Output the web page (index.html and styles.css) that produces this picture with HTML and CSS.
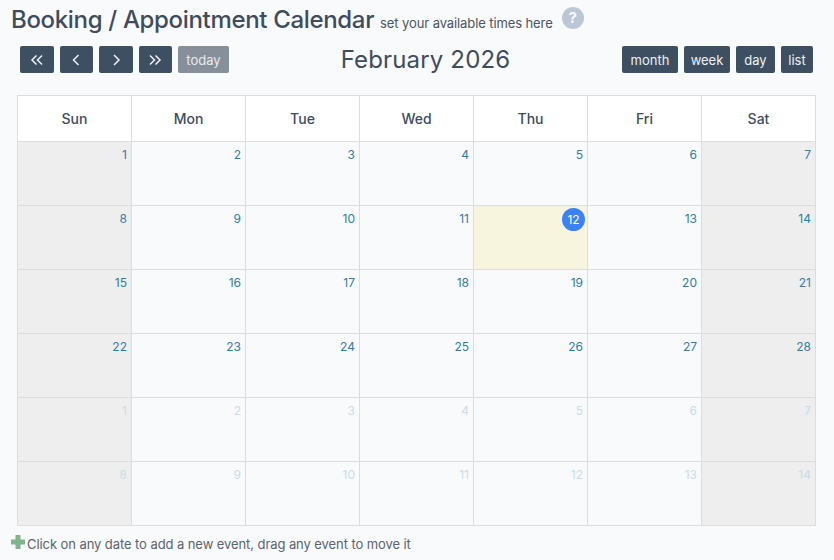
FILE: index.html
```html
<!DOCTYPE html>
<html lang="en">
<head>
<meta charset="utf-8">
<title>Booking / Appointment Calendar</title>
<link rel="stylesheet" href="styles.css">
</head>
<body>
<header class="page-head">
  <h1 class="page-title">Booking / Appointment Calendar</h1>
  <span class="page-sub">set your available times here</span>
  <span class="help">?</span>
</header>
<div class="toolbar">
  <div class="btn-group">
    <button class="btn"><svg class="ico" viewBox="0 0 14 12"><path d="M6.500 1.500 2 6l4.500 4.500M12 1.500 7.500 6l4.500 4.500"/></svg></button>
    <button class="btn"><svg class="ico" viewBox="0 0 14 12"><path d="M9.500 1 4.500 6l5 5"/></svg></button>
    <button class="btn"><svg class="ico" viewBox="0 0 14 12"><path d="M5 1l5 5-5 5"/></svg></button>
    <button class="btn"><svg class="ico" viewBox="0 0 14 12"><path d="M2 1.500 6.500 6 2 10.500M7.500 1.500 12 6l-4.500 4.500"/></svg></button>
    <button class="btn btn-today">today</button>
  </div>
  <h2 class="cal-title">February 2026</h2>
  <div class="btn-group">
    <button class="btn btn-month">month</button>
    <button class="btn btn-week">week</button>
    <button class="btn btn-day">day</button>
    <button class="btn btn-list">list</button>
  </div>
</div>
<div class="calendar">
  <div class="dow">Sun</div><div class="dow">Mon</div><div class="dow">Tue</div><div class="dow">Wed</div><div class="dow">Thu</div><div class="dow">Fri</div><div class="dow">Sat</div>

  <div class="day weekend">1</div><div class="day">2</div><div class="day">3</div><div class="day">4</div><div class="day">5</div><div class="day">6</div><div class="day weekend">7</div>
  <div class="day weekend">8</div><div class="day">9</div><div class="day">10</div><div class="day">11</div><div class="day today"><span class="today-num">12</span></div><div class="day">13</div><div class="day weekend">14</div>
  <div class="day weekend">15</div><div class="day">16</div><div class="day">17</div><div class="day">18</div><div class="day">19</div><div class="day">20</div><div class="day weekend">21</div>
  <div class="day weekend">22</div><div class="day">23</div><div class="day">24</div><div class="day">25</div><div class="day">26</div><div class="day">27</div><div class="day weekend">28</div>
  <div class="day weekend other">1</div><div class="day other">2</div><div class="day other">3</div><div class="day other">4</div><div class="day other">5</div><div class="day other">6</div><div class="day weekend other">7</div>
  <div class="day weekend other">8</div><div class="day other">9</div><div class="day other">10</div><div class="day other">11</div><div class="day other">12</div><div class="day other">13</div><div class="day weekend other">14</div>
</div>
<p class="hint"><svg class="plus" viewBox="0 0 14 14"><path d="M4.500 0h5v4.500H14v5H9.500V14h-5V9.500H0v-5h4.500z"/></svg>Click on any date to add a new event, drag any event to move it</p>
</body>
</html>
```
FILE: styles.css
```css
* { box-sizing: border-box; }
html, body { margin: 0; height: 100%; }
body {
  width: 834px;
  height: 560px;
  overflow: hidden;
  background: #f8fafc;
  color: #3e4c5d;
  font-family: Inter, "Liberation Sans", sans-serif;
  padding: 5px 0 0 11px;
}
.page-head { display: flex; align-items: baseline; height: 29px; }
.page-title { margin: 0; font-size: 24px; line-height: 30px; font-weight: 500; letter-spacing: -0.33px; color: #3e4c5d; }
.page-sub { margin-left: 6px; font-size: 13px; color: #4b5563; letter-spacing: -0.1px; }
.help {
  align-self: flex-start;
  margin: 2px 0 0 9px;
  width: 22px; height: 22px; border-radius: 50%;
  background: #bcc7d5; color: #f8fafc;
  font-size: 15px; font-weight: 700; line-height: 22px; text-align: center;
}
.toolbar {
  display: flex; justify-content: space-between; align-items: center;
  width: 793px; height: 27px; margin: 12px 0 0 9px;
}
.btn-group { display: flex; gap: 6px; }
.btn {
  height: 27px; width: 33.500px; padding: 0;
  display: flex; align-items: center; justify-content: center;
  background: #3e4f61; color: #eef1f5; border: 0; border-radius: 2px;
  font-family: inherit; font-size: 13px; letter-spacing: 0;
}
.btn-today { width: 51px; background: #868f9a; color: #e8ebee; }
.btn-month { width: 56px; }
.btn-week { width: 46px; }
.btn-day { width: 39px; }
.btn-list { width: 32px; }
.ico { width: 14px; height: 12px; fill: none; stroke: #eef1f5; stroke-width: 1.500; }
.cal-title { margin: 0; font-size: 24px; font-weight: 400; color: #3e4c5d; letter-spacing: 0.15px; }
.calendar {
  display: grid;
  grid-template-columns: repeat(7, 114px);
  grid-template-rows: 46px repeat(6, 64px);
  width: 799px;
  margin: 22px 0 0 6px;
  border-top: 1px solid #ddd;
  border-left: 1px solid #ddd;
}
.dow {
  display: flex; align-items: center; justify-content: center;
  background: #fff;
  border-right: 1px solid #ddd; border-bottom: 1px solid #ddd;
  font-size: 14px; font-weight: 500; color: #3e4c5d;
}
.day {
  border-right: 1px solid #ddd; border-bottom: 1px solid #ddd;
  padding: 5px 4px 0 0;
  text-align: right;
  font-size: 12px; line-height: 16px; color: #2a7fab;
}
.weekend { background: #eee; }
.other { color: #c8dce8; }
.today { background: #f7f5de; padding: 2px 2px 0 0; }
.today-num {
  display: inline-block; width: 23px; height: 23px; border-radius: 50%;
  background: #3b82f6; color: #fff; line-height: 23px; text-align: center;
}
.hint {
  margin: 8px 0 0 0; height: 20px;
  display: flex; align-items: center;
  font-size: 13px; color: #5b6470; letter-spacing: -0.08px;
}
.plus { width: 14px; height: 14px; fill: #7fb58a; margin: -5px 2px 0 0; }
```
